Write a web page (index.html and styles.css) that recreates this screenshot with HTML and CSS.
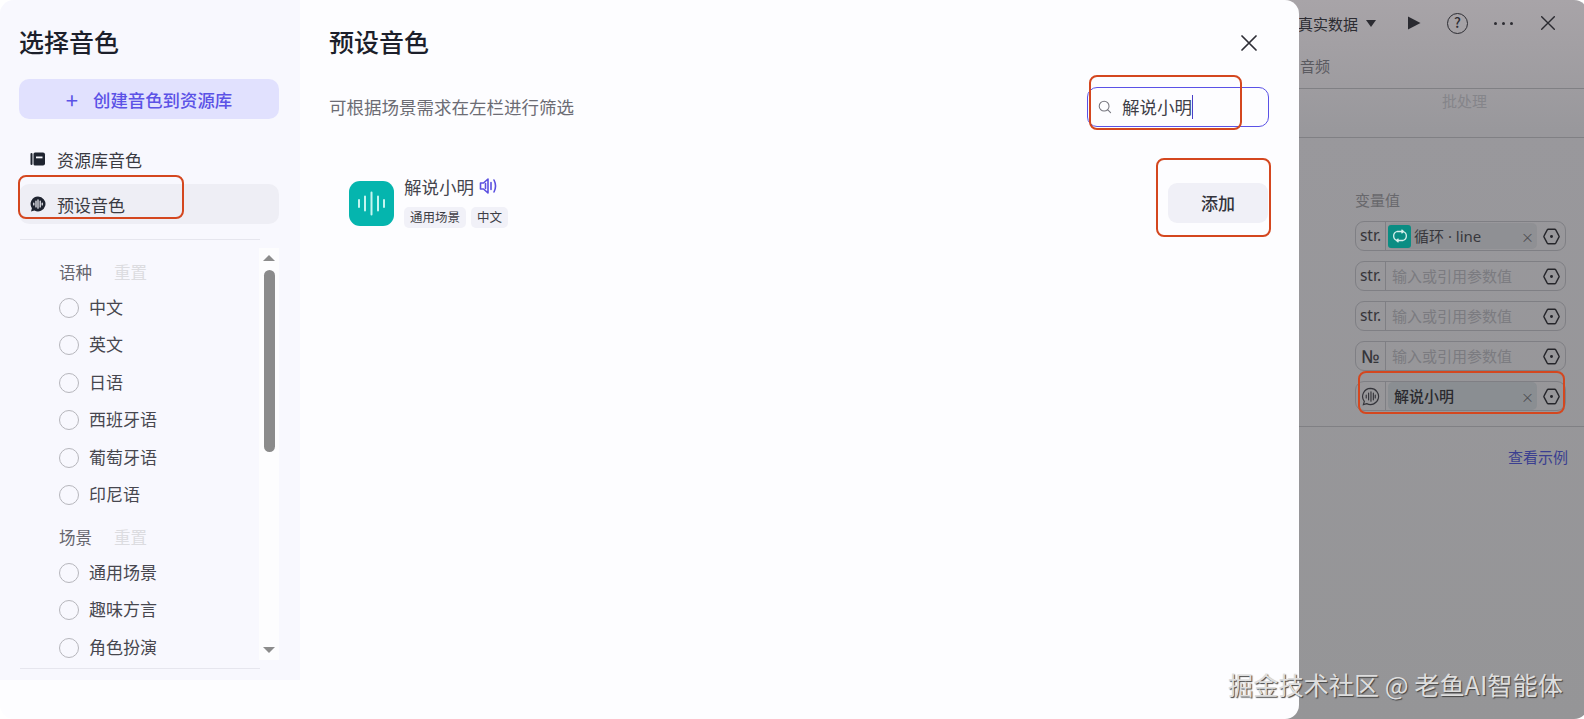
FILE: index.html
```html
<!doctype html>
<html>
<head>
<meta charset="utf-8">
<title>选择音色</title>
<link rel="stylesheet" href="styles.css">
</head>

<body>
<svg class="sprite">
	<symbol id="hex" viewBox="0 0 16 16"><path d="M5 1.2h6a1.2 1.2 0 0 1 1 .6l3 5.6a1.2 1.2 0 0 1 0 1.2l-3 5.6a1.2 1.2 0 0 1-1 .6H5a1.2 1.2 0 0 1-1-.6L1 8.6a1.2 1.2 0 0 1 0-1.2l3-5.6a1.2 1.2 0 0 1 1-.6z" fill="none" stroke="#26262b" stroke-width="1.3"/><circle cx="8" cy="8" r="1.4" fill="#26262b"/></symbol>
</svg>
<div class="screen">
	<div class="modal">
		<div class="side">
			<h2 class="side-title">选择音色</h2>
			<div class="create-btn"><span class="plus">+</span>创建音色到资源库</div>
			<div class="nav-item">
				<svg class="nav-icon" viewBox="0 0 16 16"><rect x="0.5" y="2" width="2" height="12" rx="1" fill="#1f2430"/><path d="M5 1.5h8a2 2 0 0 1 2 2v9a2 2 0 0 1-2 2H5a1.5 1.5 0 0 1-1.5-1.5V3A1.5 1.5 0 0 1 5 1.5z" fill="#1f2430"/><rect x="6" y="5.5" width="6.5" height="1.8" fill="#f8f8fe"/></svg>
				资源库音色
			</div>
			<div class="nav-item nav-active">
				<svg class="nav-icon" viewBox="0 0 16 16"><path d="M8 0.5a7.5 7.5 0 1 1-3.6 14.1L1 15.5l.9-3.3A7.5 7.5 0 0 1 8 .5z" fill="#1f2430"/><path d="M3.8 7v2M6 5v6M8 3.8v8.4M10.2 5v6M12.2 7v2" stroke="#f8f8fe" stroke-width="1.2" stroke-linecap="round"/></svg>
				预设音色
			</div>
			<div class="side-line"></div>
			<div class="filter-wrap">
				<div class="filters">
					<div class="filter-head">语种<span class="reset">重置</span></div>
					<div class="radio"><i></i>中文</div>
					<div class="radio"><i></i>英文</div>
					<div class="radio"><i></i>日语</div>
					<div class="radio"><i></i>西班牙语</div>
					<div class="radio"><i></i>葡萄牙语</div>
					<div class="radio"><i></i>印尼语</div>
					<div class="filter-head filter-next">场景<span class="reset">重置</span></div>
					<div class="radio"><i></i>通用场景</div>
					<div class="radio"><i></i>趣味方言</div>
					<div class="radio"><i></i>角色扮演</div>
				</div>
				<div class="scrollbar">
					<span class="arrow-up"></span>
					<span class="thumb"></span>
					<span class="arrow-down"></span>
				</div>
			</div>
			<div class="side-line side-line-end"></div>
		</div>
		<div class="main">
			<div class="main-top">
				<h2 class="main-title">预设音色</h2>
				<svg class="main-close" viewBox="0 0 16 16"><path d="M1 1l14 14M15 1L1 15" stroke="#2e2e36" stroke-width="1.7" stroke-linecap="round"/></svg>
			</div>
			<div class="search-row">
				<p class="desc">可根据场景需求在左栏进行筛选</p>
				<div class="search">
					<svg class="search-icon" viewBox="0 0 16 16"><circle cx="7" cy="7" r="5.6" fill="none" stroke="#77777f" stroke-width="1.2"/><path d="M11.2 11.2l3.2 3.2" stroke="#77777f" stroke-width="1.2" stroke-linecap="round"/></svg>
					<span class="search-text">解说小明</span><span class="caret"></span>
				</div>
			</div>
			<div class="voice">
				<div class="voice-logo">
					<svg viewBox="0 0 45 45"><path d="M10 19v7M16 15.500v14M22.500 11.500v22M29 15.500v14M35 19v7" stroke="#c5f5f0" stroke-width="2" stroke-linecap="round"/></svg>
				</div>
				<div class="voice-info">
					<div class="voice-name">解说小明
						<svg class="voice-sound" viewBox="0 0 18 18"><path d="M1.500 6h3L9 2v14l-4.500-4h-3z" fill="none" stroke="#5b4fe0" stroke-width="1.600" stroke-linejoin="round"/><path d="M6.500 6.500v5M12 5.500v7M15 3c1.800 3.500 1.800 8.500 0 12" fill="none" stroke="#5b4fe0" stroke-width="1.600" stroke-linecap="round"/></svg>
					</div>
					<div class="tags"><span class="tag">通用场景</span><span class="tag">中文</span></div>
				</div>
				<div class="add-btn">添加</div>
			</div>
		</div>
	</div>
	<div class="panel">
		<div class="panel-head">
			<span class="data-type">真实数据</span>
			<span class="data-arrow"></span>
			<svg class="play" viewBox="0 0 14 14"><path d="M1 0.500l12.500 6.500L1 13.500z" fill="#2a2a30"/></svg>
			<span class="help">?</span>
			<span class="dots"><i></i><i></i><i></i></span>
			<svg class="panel-close" viewBox="0 0 14 14"><path d="M0.700 0.700l12.600 12.600M13.300 0.700L0.700 13.300" stroke="#2a2a30" stroke-width="1.400" stroke-linecap="round"/></svg>
		</div>
		<div class="panel-tab">音频</div>
		<div class="panel-sub">批处理</div>
		<div class="vars">
			<div class="vars-title">变量值</div>
			<div class="var-row">
				<span class="var-type">str.</span>
				<div class="chip">
					<span class="loop-icon"><svg viewBox="0 0 16 16"><path d="M5 12.500A4.700 4.700 0 0 1 5 3.500h6M11 3.500A4.700 4.700 0 0 1 11 12.500H5M9.500 1.800L11.500 3.500 9.500 5.200M6.500 10.800L4.500 12.500l2 1.700" fill="none" stroke="#d8f0ec" stroke-width="1.300"/></svg></span>
					<span class="chip-text chip-loop">循环 · line</span>
					<span class="chip-x">×</span>
				</div>
				<svg class="hex"><use href="#hex"/></svg>
			</div>
			<div class="var-row">
				<span class="var-type">str.</span>
				<span class="placeholder">输入或引用参数值</span>
				<svg class="hex"><use href="#hex"/></svg>
			</div>
			<div class="var-row">
				<span class="var-type">str.</span>
				<span class="placeholder">输入或引用参数值</span>
				<svg class="hex"><use href="#hex"/></svg>
			</div>
			<div class="var-row">
				<span class="var-type var-num">№</span>
				<span class="placeholder">输入或引用参数值</span>
				<svg class="hex"><use href="#hex"/></svg>
			</div>
			<div class="var-row">
				<span class="var-type var-type-icon">
					<svg class="var-voice" viewBox="0 0 20 20"><path d="M10 1.500a8.500 8.500 0 1 1-4 16l-3.500 1 1-3.300A8.500 8.500 0 0 1 10 1.500z" fill="none" stroke="#34343a" stroke-width="1.200"/><path d="M5.500 8.500v3M8 6.500v7M10.500 5v10M13 6.500v7M15 8.500v3" stroke="#34343a" stroke-width="1.200" stroke-linecap="round"/></svg>
				</span>
				<div class="chip chip-voice">
					<span class="chip-text chip-strong">解说小明</span>
					<span class="chip-x">×</span>
				</div>
				<svg class="hex"><use href="#hex"/></svg>
			</div>
		</div>
		<div class="example">查看示例</div>
	</div>

	<div class="mark mark-search"></div>
	<div class="mark mark-add"></div>
	<div class="mark mark-nav"></div>
	<div class="mark mark-row"></div>
	<div class="watermark">掘金技术社区 @ 老鱼AI智能体</div>
</div>
</body>
</html>
```

FILE: styles.css
```css
*{ margin:0; padding:0; box-sizing:border-box; }
body{ background:#fff; font-family:"Noto Sans CJK SC","Noto Sans",sans-serif; overflow:hidden; }
h2{ font-weight:500; }
i{ font-style:normal; }
.sprite{ display:none; }
.screen{ position:relative; display:flex; width:1584px; height:719px; overflow:hidden; }

/* 弹窗 */
.modal{ position:relative; z-index:1; display:flex; flex:none; width:1299px; height:719px; background:#fdfdff; border-radius:14px; overflow:hidden; }
.side{ flex:none; width:300px; height:680px; padding:21px 21px 0 19px; background:#f8f8fe; }
.side-title{ font-size:25px; line-height:40px; color:#1c1f2b; }
.create-btn{ display:flex; align-items:center; justify-content:center; height:40px; margin-top:18px; border-radius:10px; background:#e1e1fe; color:#5b52e6; font-size:17.4px; font-weight:500; }
.plus{ margin-right:15px; font-size:22px; font-weight:400; line-height:40px; }
.nav-item{ display:flex; align-items:center; height:40px; margin-top:5px; padding-left:11px; font-size:17px; color:#3a3a42; border-radius:10px; }
.create-btn + .nav-item{ margin-top:20px; }
.nav-active{ background:#eeeef5; }
.nav-icon{ width:16px; height:16px; margin-right:11px; }
.side-line{ width:240px; height:1px; margin:15px 0 0 1px; background:#e6e6ee; }
.side-line-end{ margin-top:0; }
.filter-wrap{ display:flex; height:428px; }
.filters{ flex:1; padding:20px 0 0 40px; overflow:hidden; }
.filter-head{ height:24px; margin-bottom:5px; font-size:16.5px; line-height:24px; color:#66666e; }
.filter-next{ margin-top:11px; }
.reset{ margin-left:22px; color:#dcdce0; }
.radio{ display:flex; align-items:center; height:37.5px; padding-bottom:2px; font-size:17px; line-height:22px; color:#47474f; }
.radio i{ flex:none; width:20px; height:20px; margin-right:10px; margin-top:2px; border:1px solid #b6b6bc; border-radius:50%; }
.scrollbar{ display:flex; flex:none; flex-direction:column; align-items:center; width:20px; height:412px; margin-top:8px; background:#fdfdfe; }
.arrow-up{ width:0; height:0; margin-top:7px; border:6.5px solid transparent; border-top:0; border-bottom:6px solid #8c8c8c; }
.thumb{ width:11px; height:182px; margin-top:9px; border-radius:6px; background:#8b8b8b; }
.arrow-down{ width:0; height:0; margin-top:auto; margin-bottom:7px; border:6.5px solid transparent; border-bottom:0; border-top:6px solid #8c8c8c; }

.main{ flex:1; padding:21px 30px 0 29px; }
.main-top{ display:flex; align-items:center; justify-content:space-between; height:40px; }
.main-title{ font-size:25px; line-height:40px; color:#1c1f2b; }
.main-close{ width:16px; height:16px; margin:4px 12px 0 0; }
.search-row{ display:flex; align-items:center; justify-content:space-between; margin-top:26px; }
.desc{ margin-top:-2px; font-size:17.5px; color:#6c6c74; }
.search{ display:flex; align-items:center; width:182px; height:40px; padding-left:10px; border:1px solid #5b52e6; border-radius:10px; }
.search-icon{ width:14px; height:14px; margin-right:10px; }
.search-text{ margin-top:-2px; font-size:17.5px; color:#3f3f47; }
.caret{ width:1px; height:24px; background:#4a40c8; }
.voice{ display:flex; align-items:center; height:45px; margin:54px 0 0 20px; }
.voice-logo{ flex:none; width:45px; height:45px; margin-right:10px; border-radius:11px; background:#05b5ae; }
.voice-logo svg{ display:block; width:45px; height:45px; }
.voice-info{ flex:1; align-self:flex-start; }
.voice-name{ display:flex; align-items:center; height:24px; margin-top:-7px; font-size:17.5px; color:#45454d; }
.voice-sound{ width:18px; height:18px; margin-left:5px; }
.tags{ display:flex; gap:5px; margin-top:9px; }
.tag{ height:21px; padding:0 6px; border-radius:5px; background:#f1f1f8; font-size:12.5px; line-height:20px; color:#3d3d45; }
.add-btn{ flex:none; width:100px; height:40px; margin:-1px 1px 0 0; border-radius:9px; background:#f0f0f7; font-size:17px; font-weight:500; line-height:39px; text-align:center; color:#33333b; }

/* 背后的面板 */
.panel{ flex:1; height:719px; margin-left:-14px; padding-left:14px; border-radius:0 14px 14px 0; background:linear-gradient(#a8a4a8,#99989c 130px,#959597); }
.panel-head{ display:flex; align-items:center; height:46px; margin-left:-1px; font-size:15px; color:#2c2c32; }
.data-arrow{ width:0; height:0; margin-left:8px; border:5px solid transparent; border-bottom:0; border-top:7px solid #2c2c32; }
.play{ width:14px; height:14px; margin-left:31px; }
.help{ width:21px; height:21px; margin-left:26px; border:1.5px solid #2c2c32; border-radius:50%; font-size:14px; font-weight:500; line-height:17px; text-align:center; }
.dots{ display:flex; gap:5px; margin-left:26px; }
.dots i{ width:3px; height:3px; border-radius:50%; background:#2c2c32; }
.panel-close{ width:14px; height:14px; margin-left:28px; }
.panel-tab{ height:43px; padding:8px 0 0 1px; border-bottom:1px solid #808084; font-size:15px; line-height:24px; color:#5a5a60; }
.panel-sub{ height:49px; padding:0 0 0 143px; border-bottom:1px solid #808084; font-size:15px; line-height:24px; color:#85858a; }
.vars{ height:289px; margin-right:4px; padding:52px 18px 0 56px; border-bottom:1px solid #808084; }
.vars-title{ height:22px; margin-bottom:9px; font-size:15px; line-height:20px; color:#68686c; }
.var-row{ display:flex; align-items:center; width:211px; height:30px; margin-bottom:10px; border:1px solid #7f7f84; border-radius:9px; }
.var-type{ display:flex; flex:none; align-items:center; justify-content:center; width:30px; height:100%; padding-bottom:2px; border-right:1px solid #7f7f84; font-family:"Noto Sans",sans-serif; font-size:15.5px; color:#35353a; }
.var-type-icon{ padding-bottom:0; }
.var-num{ padding-bottom:1px; font-size:18px; font-weight:500; }
.var-voice{ width:19px; height:19px; }
.chip{ display:flex; flex:1; align-items:center; height:26px; margin-left:2px; padding-right:3px; border-radius:5px; background:#8f9094; }
.chip-voice{ height:28px; padding-left:6px; background:#8a8e92; }
.loop-icon{ display:flex; align-items:center; justify-content:center; width:23px; height:23px; margin-right:3px; border-radius:3px; background:#0b8d83; }
.loop-icon svg{ width:16px; height:16px; }
.chip-text{ flex:1; padding-bottom:1px; font-size:15px; color:#38383d; }
.chip-loop{ font-family:"Noto Sans","Noto Sans CJK SC",sans-serif; }
.chip-strong{ font-weight:500; color:#2a2a2f; }
.chip-x{ font-size:13px; color:#4e4e52; }
.placeholder{ flex:1; padding:0 0 1px 6px; font-size:15px; color:#7b7b80; }
.hex{ flex:none; width:17px; height:17px; margin:0 5px 0 6px; }
.example{ margin-top:19px; padding-right:20px; font-size:15px; line-height:22px; text-align:right; color:#3b3f90; }

/* 红框标注 */
.mark{ position:absolute; z-index:2; border:2.5px solid #d4471f; border-radius:8px; }
.mark-search{ left:1089px; top:75px; width:153px; height:55px; }
.mark-add{ left:1156px; top:158px; width:115px; height:79px; }
.mark-nav{ left:18px; top:175px; width:166px; height:44px; }
.mark-row{ left:1358px; top:371px; width:207px; height:43px; }
.watermark{ position:absolute; z-index:3; left:1228px; top:666px; font-size:25.2px; line-height:36px; white-space:nowrap; color:#dedede; text-shadow:1px 1px 1px #444; }
```
